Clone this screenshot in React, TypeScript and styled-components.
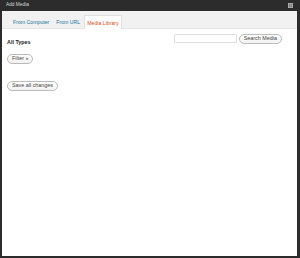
import React from "react";
import styled, { createGlobalStyle } from "styled-components";

const Global = createGlobalStyle`
  html, body { margin: 0; padding: 0; background: #fff; }
  * { box-sizing: border-box; }
`;

const Frame = styled.div`
  width: 300px;
  height: 258px;
  background: #2c2c2c;
  padding: 0 3px 2px 2px;
  display: flex;
  flex-direction: column;
  font-family: "Liberation Sans", Arial, sans-serif;
`;

const TitleBar = styled.div`
  height: 11px;
  flex: none;
  display: flex;
  align-items: center;
  justify-content: space-between;
  padding: 0 4px 0 4px;
`;

const Title = styled.span`
  color: #d8d8d8;
  font-size: 4.8px;
  line-height: 1;
`;

const Close = styled.span`
  width: 5px;
  height: 5px;
  background: #8a8a8a;
  border: 1px solid #a8a8a8;
  display: block;
`;

const Body = styled.div`
  flex: 1;
  background: #fff;
  display: flex;
  flex-direction: column;
`;

const TabBar = styled.div`
  height: 18px;
  flex: none;
  background: #f1f1f1;
  display: flex;
  align-items: flex-end;
  padding-left: 8px;
  border-bottom: 1px solid #e6e6e6;
`;

const Tab = styled.span<{ $active?: boolean }>`
  height: ${(p) => (p.$active ? "14px" : "13px")};
  margin-bottom: ${(p) => (p.$active ? "-1px" : "0")};
  padding: ${(p) => (p.$active ? "0 2px" : "0 3px")};
  margin-right: 1px;
  display: flex;
  align-items: center;
  font-size: 5.2px;
  white-space: nowrap;
  color: ${(p) => (p.$active ? "#d54e21" : "#21759b")};
  background: ${(p) => (p.$active ? "#fff" : "transparent")};
  border: ${(p) => (p.$active ? "1px solid #dfdfdf" : "none")};
  border-bottom: none;
`;

const Content = styled.div`
  padding: 5px 15px 0 5px;
  display: flex;
  flex-direction: column;
  align-items: flex-start;
`;

const TopRow = styled.div`
  align-self: stretch;
  display: flex;
  justify-content: space-between;
  align-items: flex-start;
`;

const Label = styled.span`
  font-weight: bold;
  font-size: 5.4px;
  line-height: 8px;
  color: #222;
  margin-top: 4px;
`;

const Search = styled.div`
  display: flex;
  align-items: flex-start;
  gap: 2px;
`;

const Input = styled.div`
  width: 63px;
  height: 9px;
  border: 1px solid #dfdfdf;
  background: #fff;
  border-radius: 1px;
`;

const Button = styled.button<{ $mt?: number }>`
  height: 10px;
  margin: ${(p) => p.$mt ?? 0}px 0 0 0;
  padding: 0 4px;
  border: 1px solid #bbb;
  border-radius: 6px;
  background: linear-gradient(#fefefe, #f2f2f2);
  color: #464646;
  font-family: "Liberation Sans", Arial, sans-serif;
  font-size: 5.4px;
  line-height: 1;
  white-space: nowrap;
  display: flex;
  align-items: center;
`;

export default function App() {
  return (
    <>
      <Global />
      <Frame>
        <TitleBar>
          <Title>Add Media</Title>
          <Close />
        </TitleBar>
        <Body>
          <TabBar>
            <Tab>From Computer</Tab>
            <Tab>From URL</Tab>
            <Tab $active>Media Library</Tab>
          </TabBar>
          <Content>
            <TopRow>
              <Label>All Types</Label>
              <Search>
                <Input />
                <Button>Search Media</Button>
              </Search>
            </TopRow>
            <Button $mt={8}>Filter »</Button>
            <Button $mt={17}>Save all changes</Button>
          </Content>
        </Body>
      </Frame>
    </>
  );
}
